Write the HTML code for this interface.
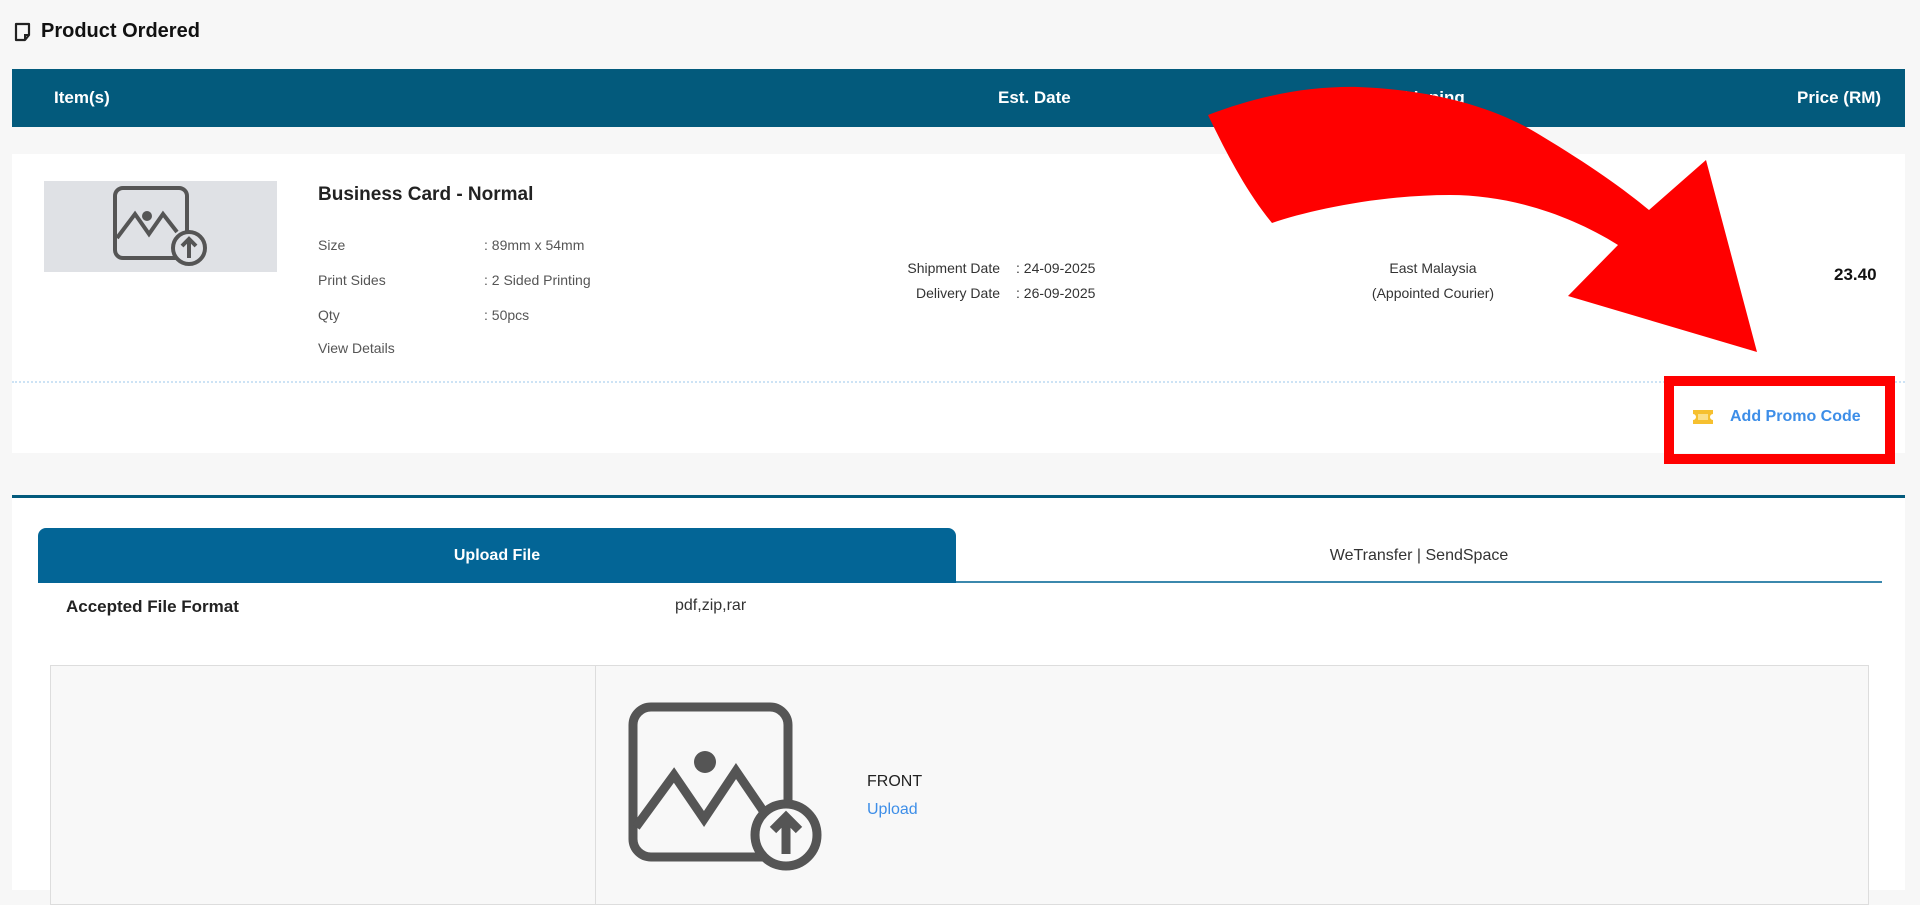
<!DOCTYPE html>
<html><head><meta charset="utf-8"><style>
*{margin:0;padding:0;box-sizing:border-box}
body{width:1920px;height:890px;overflow:hidden;background:#f7f7f7;font-family:"Liberation Sans",sans-serif;position:relative;color:#222}
.a{position:absolute;white-space:nowrap}
.g{color:#555;font-size:14px}
</style></head><body>
<svg class="a" style="left:14px;top:22px" width="18" height="20" viewBox="0 0 18 20"><path d="M2 2h13v11l-4 5H2z" fill="none" stroke="#222" stroke-width="2.2" stroke-linejoin="round"/><path d="M15 13h-4v5" fill="none" stroke="#222" stroke-width="2"/></svg>
<div class="a" style="left:41px;top:20px;font-size:20px;font-weight:bold;color:#111">Product Ordered</div>

<div class="a" style="left:12px;top:69px;width:1893px;height:58px;background:#035a7c"></div>
<div class="a" style="left:54px;top:88px;font-size:17px;font-weight:bold;color:#fff">Item(s)</div>
<div class="a" style="left:998px;top:88px;font-size:17px;font-weight:bold;color:#fff">Est. Date</div>
<div class="a" style="left:1392px;top:88px;font-size:17px;font-weight:bold;color:#fff">Shipping</div>
<div class="a" style="left:1797px;top:88px;font-size:17px;font-weight:bold;color:#fff">Price (RM)</div>

<div class="a" style="left:12px;top:154px;width:1893px;height:299px;background:#fff"></div>
<div class="a" style="left:44px;top:181px;width:233px;height:91px;background:#dfe1e5"></div>
<svg class="a" style="left:113px;top:186px" width="94" height="82" viewBox="0 0 94 82"><rect x="2" y="2" width="72" height="70" rx="8" fill="none" stroke="#555" stroke-width="4"/><circle cx="34" cy="30" r="5" fill="#555"/><path d="M4 52l18-24 14 20 14-20 14 18" fill="none" stroke="#555" stroke-width="4"/><circle cx="76" cy="62" r="16" fill="#dfe1e5" stroke="#555" stroke-width="4"/><path d="M76 72V54M69 60l7-7 7 7" fill="none" stroke="#555" stroke-width="4"/></svg>
<div class="a" style="left:318px;top:184px;font-size:19px;font-weight:bold;color:#222">Business Card - Normal</div>
<div class="a g" style="left:318px;top:237px">Size</div><div class="a g" style="left:484px;top:237px">: 89mm x 54mm</div>
<div class="a g" style="left:318px;top:272px">Print Sides</div><div class="a g" style="left:484px;top:272px">: 2 Sided Printing</div>
<div class="a g" style="left:318px;top:307px">Qty</div><div class="a g" style="left:484px;top:307px">: 50pcs</div>
<div class="a g" style="left:318px;top:340px">View Details</div>
<div class="a" style="left:882px;top:256px;width:118px;font-size:14px;color:#333;text-align:right;line-height:25px">Shipment Date<br>Delivery Date</div>
<div class="a" style="left:1016px;top:256px;font-size:14px;color:#333;line-height:25px">: 24-09-2025<br>: 26-09-2025</div>
<div class="a" style="left:1333px;top:256px;width:200px;text-align:center;font-size:14px;color:#333;line-height:25px">East Malaysia<br>(Appointed Courier)</div>
<div class="a" style="left:1834px;top:265px;font-size:17px;font-weight:bold;color:#111">23.40</div>
<div class="a" style="left:12px;top:381px;width:1893px;border-top:2px dotted #cde3f5"></div>
<svg class="a" style="left:1693px;top:410px" width="20" height="14" viewBox="0 0 20 14"><path d="M0 0h20v4a3 3 0 0 0 0 6v4H0v-4a3 3 0 0 0 0-6z" fill="#f6c02f"/><rect x="5" y="4" width="10" height="6" fill="#fbe08a"/></svg>
<div class="a" style="left:1730px;top:408px;font-size:16px;font-weight:bold;color:#3d8ee8">Add Promo Code</div>

<div class="a" style="left:12px;top:495px;width:1893px;height:395px;background:#fff;border-top:3px solid #035a7c"></div>
<div class="a" style="left:38px;top:528px;width:918px;height:55px;background:#036596;border-radius:8px 8px 0 0;color:#fff;font-size:16px;font-weight:bold;text-align:center;line-height:55px">Upload File</div>
<div class="a" style="left:956px;top:528px;width:926px;height:55px;border-bottom:2px solid #3b88ad;color:#333;font-size:16px;text-align:center;line-height:55px">WeTransfer | SendSpace</div>
<div class="a" style="left:66px;top:597px;font-size:17px;font-weight:bold;color:#222">Accepted File Format</div>
<div class="a" style="left:675px;top:597px;font-size:16px;color:#333">pdf,zip,rar</div>
<div class="a" style="left:50px;top:665px;width:1819px;height:240px;background:#f8f8f8;border:1px solid #ddd"></div>
<div class="a" style="left:595px;top:665px;width:1px;height:240px;background:#ddd"></div>
<svg class="a" style="left:628px;top:702px" width="202" height="170" viewBox="0 0 202 170"><rect x="5" y="5" width="155" height="150" rx="18" fill="none" stroke="#555" stroke-width="9"/><circle cx="77" cy="60" r="11" fill="#555"/><path d="M8 125l38-52 30 44 32-48 30 44" fill="none" stroke="#555" stroke-width="9"/><circle cx="158" cy="133" r="31" fill="#f8f8f8" stroke="#555" stroke-width="9"/><path d="M158 152v-36M145 128l13-13 13 13" fill="none" stroke="#555" stroke-width="9"/></svg>
<div class="a" style="left:867px;top:773px;font-size:16px;color:#222">FRONT</div>
<div class="a" style="left:867px;top:801px;font-size:16px;color:#3d8ee8">Upload</div>

<svg class="a" style="left:0;top:0" width="1920" height="890" viewBox="0 0 1920 890">
<path d="M1208 115 C1260 95 1310 86 1358 87 C1440 90 1500 110 1540 135 C1590 165 1625 190 1649 210 L1706 160 L1757 352 L1568 296 L1618 245 C1570 215 1510 195 1450 195 C1380 195 1310 210 1272 223 C1245 190 1225 150 1208 115 Z" fill="#ff0000"/>
<rect x="1669" y="381" width="221" height="78" fill="none" stroke="#ff0000" stroke-width="10"/>
</svg>
</body></html>
